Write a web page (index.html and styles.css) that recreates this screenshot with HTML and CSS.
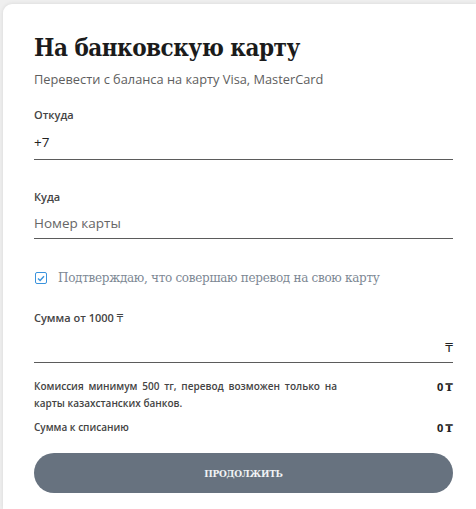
FILE: index.html
```html
<!DOCTYPE html>
<html lang="ru">
<head>
<meta charset="utf-8">
<link rel="stylesheet" href="styles.css">
</head>
<body>
<div class="card">
  <h1 class="title">На банковскую карту</h1>
  <p class="subtitle">Перевести с баланса на карту Visa, MasterCard</p>

  <div class="field field-from">
    <div class="label">Откуда</div>
    <div class="input"><span class="value">+7</span></div>
  </div>

  <div class="field field-to">
    <div class="label">Куда</div>
    <div class="input"><span class="placeholder">Номер карты</span></div>
  </div>

  <label class="check">
    <span class="box"><svg width="8" height="7" viewBox="0 0 8 7"><path d="M1 3.6 L3.1 5.5 L7 1.2" fill="none" stroke="#3a93dd" stroke-width="1.4"/></svg></span>
    <span class="check-text">Подтверждаю, что совершаю перевод на свою карту</span>
  </label>

  <div class="field field-sum">
    <div class="label">Сумма от 1000 <span class="tg-light">₸</span></div>
    <div class="input input-sum"><span class="currency">₸</span></div>
  </div>

  <div class="row row-fee">
    <p class="fee-text">Комиссия минимум 500 тг, перевод возможен только на карты казахстанских банков.</p>
    <span class="amount">0<span class="tg">₸</span></span>
  </div>
  <div class="row row-total">
    <span class="total-text">Сумма к списанию</span>
    <span class="amount">0<span class="tg">₸</span></span>
  </div>

  <button class="btn">ПРОДОЛЖИТЬ</button>
</div>
</body>
</html>
```

FILE: styles.css
```css
html, body {
  margin: 0;
  padding: 0;
}
body {
  background: #efefef;
  font-family: "Open Sans", "Liberation Sans", sans-serif;
  height: 509px;
  overflow: hidden;
}
.card {
  background: #fff;
  margin: 4px 0 0 3px;
  height: 505px;
  border-radius: 9px 0 0 0;
  box-shadow: 0 0 4px rgba(0, 0, 0, 0.10);
  padding: 28px 0 0 31px;
  box-sizing: border-box;
}
.card > * {
  width: 419px;
}
.title {
  font-family: "DejaVu Serif Condensed", "DejaVu Serif", serif;
  font-weight: bold;
  font-size: 24px;
  line-height: 32px;
  color: #1b1b1b;
  margin: 0;
  letter-spacing: -0.5px;
}
.subtitle {
  margin: 6px 0 0;
  font-size: 12.8px;
  line-height: 18px;
  color: #5e5e5e;
}
.field {
  display: flex;
  flex-direction: column;
}
.field-from { margin-top: 19px; }
.field-to { margin-top: 29px; }
.field-sum { margin-top: 23px; }
.label {
  font-size: 11px;
  font-weight: 600;
  line-height: 16px;
  color: #444;
}
.field-from .input { height: 37px; }
.input {
  height: 34px;
  border-bottom: 1.5px solid #5b5b5b;
  display: flex;
  align-items: center;
  padding-top: 2px;
  box-sizing: border-box;
  font-size: 13.5px;
}
.value { color: #222; }
.placeholder { color: #666; }
.input-sum {
  height: 36px;
  justify-content: flex-end;
  padding-top: 6px;
}
.currency {
  font-size: 12px;
  color: #222;
  font-family: "DejaVu Sans", sans-serif;
}
.tg-light {
  font-family: "DejaVu Sans", sans-serif;
  font-weight: normal;
  font-size: 10px;
}
.check {
  display: flex;
  align-items: center;
  gap: 11px;
  margin-top: 30px;
  height: 18px;
}
.box {
  width: 12px;
  height: 12px;
  border: 1.5px solid #3a93dd;
  border-radius: 2px;
  box-sizing: border-box;
  display: flex;
  align-items: center;
  justify-content: center;
  margin-left: 1px;
}
.check-text {
  font-family: "DejaVu Serif", serif;
  font-size: 12px;
  color: #7d8894;
  letter-spacing: -0.3px;
}
.row {
  display: flex;
  justify-content: space-between;
  align-items: flex-start;
  font-size: 10px;
  font-weight: 600;
  color: #444;
}
.row-fee { margin-top: 15px; }
.fee-text {
  margin: 0;
  width: 303px;
  text-align: justify;
  line-height: 17px;
}
.row-total { margin-top: 7px; line-height: 17px; }
.amount {
  font-weight: 700;
  font-size: 11px;
  color: #222;
  line-height: 17px;
}
.tg {
  font-family: "DejaVu Serif", serif;
  font-weight: bold;
  margin-left: 2px;
}
.btn {
  display: block;
  margin-top: 16px;
  height: 40px;
  border: 0;
  border-radius: 20px;
  background: #67727f;
  color: #f0f2f4;
  font-family: "DejaVu Serif Condensed", "DejaVu Serif", serif;
  font-weight: bold;
  font-size: 10px;
  letter-spacing: -0.3px;
  padding: 0;
}
```
